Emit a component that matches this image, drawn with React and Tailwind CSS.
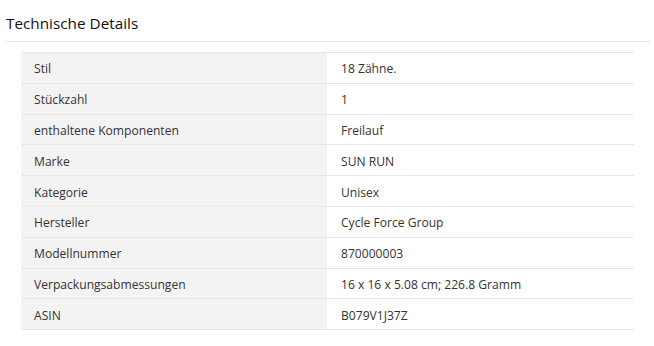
import React from "react";

const rows = [
  ["Stil", "18 Zähne."],
  ["Stückzahl", "1"],
  ["enthaltene Komponenten", "Freilauf"],
  ["Marke", "SUN RUN"],
  ["Kategorie", "Unisex"],
  ["Hersteller", "Cycle Force Group"],
  ["Modellnummer", "870000003"],
  ["Verpackungsabmessungen", "16 x 16 x 5.08 cm; 226.8 Gramm"],
  ["ASIN", "B079V1J37Z"],
];

export default function App() {
  return (
    <div className="w-[654px] h-[346px] bg-white text-[#333] font-['Open_Sans',sans-serif] overflow-hidden">
      <div className="pl-[6px] pr-[4px] pt-[11px]">
        <h2 className="text-[15.3px] leading-[24px] text-[#0f1111] pb-[6px] border-b border-[#e3e3e3]">
          Technische Details
        </h2>
      </div>
      <div className="pl-[21px] pr-[20px] pt-[10px]">
        <table className="w-full border-collapse text-[12.1px]">
          <tbody>
            {rows.map(([k, v]) => (
              <tr key={k} className="border-t border-b border-[#e7e7e7] h-[30.8px]">
                <td className="w-[306px] bg-[#f3f3f3] pl-[13px] pt-[3px] pb-0 text-[#333]">{k}</td>
                <td className="pl-[14px] pt-[3px] pb-0 text-[#333]">{v}</td>
              </tr>
            ))}
          </tbody>
        </table>
      </div>
    </div>
  );
}
